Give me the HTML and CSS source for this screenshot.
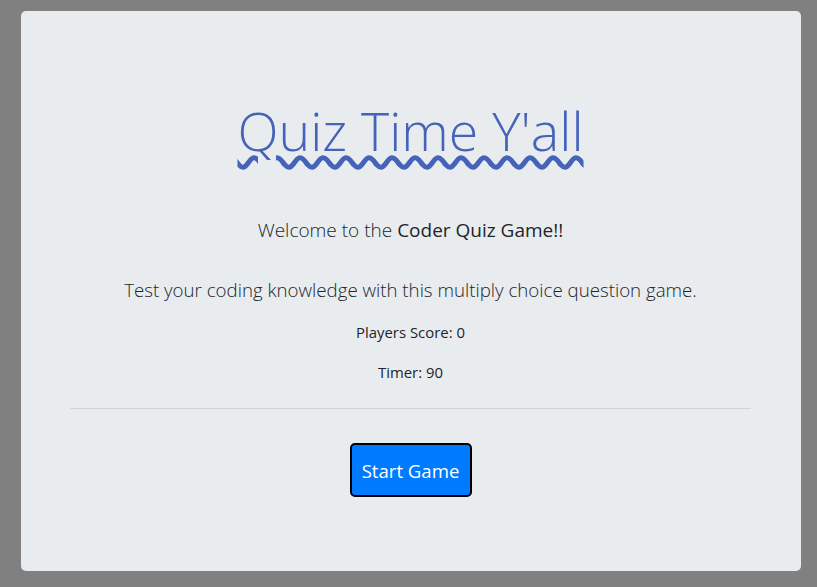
FILE: index.html
```html
<!DOCTYPE html>
<html lang="en">
<head>
<meta charset="utf-8">
<title>Coder Quiz</title>
<link rel="stylesheet" href="styles.css">
</head>
<body>
<div class="jumbotron">
  <h1 class="title">Quiz Time Y'all</h1>
  <p class="lead welcome">Welcome to the <span class="strong">Coder Quiz Game!!</span></p>
  <p class="lead intro">Test your coding knowledge with this multiply choice question game.</p>
  <p class="stat score">Players Score: 0</p>
  <p class="stat timer">Timer: 90</p>
  <hr class="rule">
  <div class="actions">
    <button class="btn-start" type="button">Start Game</button>
  </div>
</div>
</body>
</html>
```

FILE: styles.css
```css
html, body {
  margin: 0;
  padding: 0;
}
body {
  background: #808080;
  font-family: "Open Sans", "Noto Sans", sans-serif;
  color: #212529;
  padding: 11px 16px 16px 21px;
  height: 587px;
  box-sizing: border-box;
}
.jumbotron {
  background: #e9ecef;
  border-radius: 5px;
  height: 560px;
  box-sizing: border-box;
  padding: 86px 50px 0 49px;
  display: flex;
  flex-direction: column;
  align-items: stretch;
  text-align: center;
}
.title {
  margin: 0;
  font-size: 53.7px;
  line-height: 67px;
  font-weight: 300;
  color: #4563b9;
  text-decoration: underline wavy #4563b9;
  text-decoration-thickness: 5px;
  text-underline-offset: 5px;
}
.lead {
  font-size: 19px;
  line-height: 30px;
  font-weight: 300;
  margin: 0;
}
.welcome {
  margin-top: 51px;
}
.intro {
  font-size: 18.7px;
  margin-top: 30px;
}
.strong {
  font-weight: 400;
}
.stat {
  font-size: 14.9px;
  line-height: 24px;
  margin: 0;
}
.score {
  margin-top: 15px;
}
.timer {
  margin-top: 16px;
}
.rule {
  margin: 24px 0 0;
  border: 0;
  border-top: 1px solid rgba(0, 0, 0, 0.1);
}
.actions {
  margin-top: 34px;
  display: flex;
  justify-content: center;
}
.btn-start {
  font-family: inherit;
  font-size: 18.6px;
  line-height: 30px;
  white-space: nowrap;
  color: #fff;
  background: #007bff;
  border: 2px solid #000;
  border-radius: 5px;
  padding: 10px 10px 8px;
  width: 122px;
  height: 54px;
}
```
